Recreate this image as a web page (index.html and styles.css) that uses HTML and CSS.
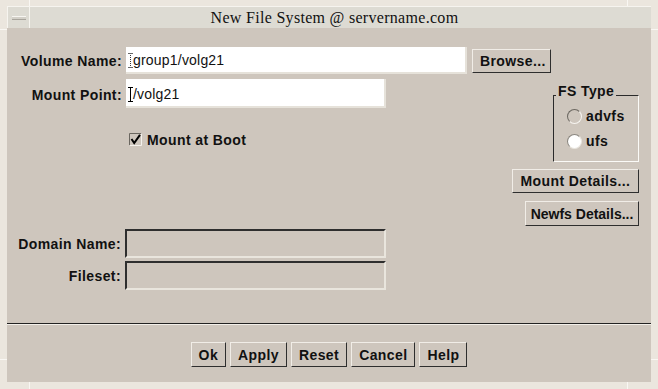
FILE: index.html
```html
<!DOCTYPE html>
<html lang="en">
<head>
    <meta charset="UTF-8">
    <meta name="viewport" content="width=device-width, initial-scale=1.0">
    <title>New File System</title>

    <link rel="stylesheet" href="styles.css">
</head>
<body>
    <div class="window">
        <div class="titlebar">
            <div class="menu-btn"><span class="menu-bar"></span></div>
            <div class="title">New File System @ servername.com</div>
        </div>

        <div class="content">
            <div class="row row-volume">
                <label class="label">Volume Name:</label>
                <div class="field field-volume"><span class="caret caret-idle"></span>group1/volg21</div>
                <button type="button" class="btn btn-browse">Browse...</button>
            </div>

            <div class="lower">
                <div class="fields">
                    <div class="row row-mount">
                        <label class="label">Mount Point:</label>
                        <div class="field field-mount"><span class="caret"></span>/volg21</div>
                    </div>

                    <div class="check-row">
                        <svg class="checkbox" width="13" height="13" viewBox="0 0 13 13">
                            <path d="M0.5 12.5V0.5H12.5" stroke="#6a665f" fill="none"/>
                            <path d="M0.5 12.5H12.5V0.5" stroke="#f4f1ec" fill="none"/>
                            <path d="M2.5 6L5.2 10L11 1.8" stroke="#000" stroke-width="2" fill="none"/>
                        </svg>
                        <span class="check-label">Mount at Boot</span>
                    </div>

                    <div class="row row-sunken row-domain">
                        <label class="label">Domain Name:</label>
                        <div class="field-sunken"></div>
                    </div>
                    <div class="row row-sunken row-fileset">
                        <label class="label">Fileset:</label>
                        <div class="field-sunken"></div>
                    </div>
                </div>

                <div class="side">
                    <div class="fs-type">
                        <span class="fs-legend">FS Type</span>
                        <div class="radio-row">
                            <span class="radio"></span>
                            <span>advfs</span>
                        </div>
                        <div class="radio-row">
                            <span class="radio radio-on"></span>
                            <span>ufs</span>
                        </div>
                    </div>
                    <button type="button" class="btn btn-mount">Mount Details...</button>
                    <button type="button" class="btn btn-newfs">Newfs Details...</button>
                </div>
            </div>

            <div class="separator"></div>

            <div class="actions">
                <button type="button" class="btn">Ok</button>
                <button type="button" class="btn">Apply</button>
                <button type="button" class="btn">Reset</button>
                <button type="button" class="btn">Cancel</button>
                <button type="button" class="btn">Help</button>
            </div>
        </div>
    </div>
</body>
</html>
```

FILE: styles.css
```css
* {
    margin: 0;
    padding: 0;
    box-sizing: border-box;
}

body {
    font-family: "Liberation Sans", Arial, sans-serif;
    font-size: 14px;
    color: #111;
}

/* window frame */
.window {
    width: 658px;
    height: 389px;
    padding: 6px 7px 7px 7px;
    display: flex;
    flex-direction: column;
    background:
        linear-gradient(#f9f7f3, #f9f7f3) 29px 0 / 1px 6px no-repeat,
        linear-gradient(#f9f7f3, #f9f7f3) 627px 0 / 1px 6px no-repeat,
        linear-gradient(#f9f7f3, #f9f7f3) 0 29px / 7px 1px no-repeat,
        linear-gradient(#f9f7f3, #f9f7f3) 651px 29px / 7px 1px no-repeat,
        linear-gradient(#f9f7f3, #f9f7f3) 0 359px / 7px 1px no-repeat,
        linear-gradient(#f9f7f3, #f9f7f3) 651px 359px / 7px 1px no-repeat,
        linear-gradient(#f9f7f3, #f9f7f3) 29px 382px / 1px 7px no-repeat,
        linear-gradient(#f9f7f3, #f9f7f3) 627px 382px / 1px 7px no-repeat,
        #ebe6de;
}

.titlebar {
    height: 22px;
    display: flex;
    background: #dddbd3;
    border-top: 1px solid #f6f4ef;
    border-left: 1px solid #f6f4ef;
}

.menu-btn {
    width: 22px;
    border-right: 1px solid #f6f4ef;
    display: flex;
    align-items: center;
    justify-content: center;
}

.menu-bar {
    width: 14px;
    height: 4px;
    background: #d3d0c8;
    border-top: 1px solid #f7f5f1;
    border-bottom: 1px solid #a8a49c;
}

.title {
    flex: 1;
    text-align: center;
    padding-right: 12px;
    font-family: "Liberation Serif", "Times New Roman", serif;
    font-size: 16px;
    letter-spacing: 0.3px;
    line-height: 21px;
    color: #111;
}

.content {
    flex: 1;
    background: #cec6bd;
    padding: 19px 12px 0 0;
    display: flex;
    flex-direction: column;
}

/* rows */
.row {
    display: flex;
    align-items: center;
}

.label {
    width: 115px;
    margin-right: 4px;
    text-align: right;
    font-weight: bold;
    letter-spacing: 0.4px;
    line-height: 16px;
}

.field {
    background: #fff;
    border-right: 2px solid #e6e2da;
    border-bottom: 2px solid #e6e2da;
    padding: 5px 0 0 2px;
    line-height: 16px;
    letter-spacing: 0.2px;
}

.field-volume {
    width: 341px;
    height: 27px;
}

.field-mount {
    width: 260px;
    height: 29px;
    padding-top: 7px;
}

.row-mount {
    align-items: flex-start;
}

.row-mount .label {
    padding-top: 8px;
}

/* text cursor */
.caret {
    display: inline-block;
    position: relative;
    width: 5px;
    height: 15px;
    vertical-align: -3px;
}

.caret::before {
    content: "";
    position: absolute;
    left: 2px;
    top: 0;
    bottom: 0;
    border-left: 1px solid #000;
}

.caret::after {
    content: "";
    position: absolute;
    inset: 0;
    border-top: 1px solid #000;
    border-bottom: 1px solid #000;
}

.caret-idle::before {
    border-left: 1px dotted #333;
}

.caret-idle::after {
    border-top-color: #666;
    border-bottom-color: #666;
}

.lower {
    display: flex;
    margin-top: 5px;
}

.fields {
    display: flex;
    flex-direction: column;
}

.check-row {
    display: flex;
    align-items: center;
    height: 13px;
    margin: 25px 0 0 122px;
    gap: 5px;
}

.check-label {
    font-weight: bold;
    letter-spacing: 0.4px;
    line-height: 16px;
}

.row-domain {
    margin-top: 83px;
}

.row-fileset {
    margin-top: 3px;
}

.row-sunken .label {
    width: 114px;
}

.field-sunken {
    width: 261px;
    height: 29px;
    border: 2px solid;
    border-color: #2e2e2e #e9e5dd #e9e5dd #2e2e2e;
}

/* right column */
.side {
    margin-left: auto;
    display: flex;
    flex-direction: column;
    align-items: flex-end;
}

.fs-type {
    position: relative;
    width: 86px;
    height: 67px;
    margin-top: 16px;
    padding: 12px 0 0 13px;
    border: 1px solid;
    border-color: #2a2a2a #fbfaf7 #fbfaf7 #2a2a2a;
}

.fs-legend {
    position: absolute;
    left: 2px;
    top: -13px;
    padding: 0 2px;
    background: #cec6bd;
    font-weight: bold;
    letter-spacing: 0.4px;
    line-height: 16px;
}

.radio-row {
    display: flex;
    align-items: center;
    gap: 4px;
    height: 16px;
    font-weight: bold;
    letter-spacing: 0.4px;
}

.radio-row + .radio-row {
    margin-top: 9px;
}

.radio {
    width: 15px;
    height: 15px;
    border-radius: 50%;
    border: 1px solid;
    border-color: #6b6760 #f7f5f1 #f7f5f1 #6b6760;
}

.radio-on {
    background: #fff;
    border-color: #8a867f #e9e5de #e9e5de #8a867f;
}

/* buttons */
.btn {
    height: 25px;
    padding: 0 7px;
    background: #cec6bd;
    border: 1px solid;
    border-color: #f1ede7 #2e2e2e #2e2e2e #f1ede7;
    font-family: "Liberation Sans", Arial, sans-serif;
    font-size: 14px;
    font-weight: bold;
    letter-spacing: 0.4px;
    white-space: nowrap;
    color: #111;
    cursor: pointer;
}

.btn-browse {
    width: 79px;
    height: 24px;
    margin-left: 5px;
}

.btn-mount {
    width: 127px;
    height: 24px;
    margin-top: 7px;
}

.btn-newfs {
    width: 114px;
    padding: 0 3px;
    margin-top: 8px;
    letter-spacing: 0;
}

.separator {
    margin: 33px -12px 0 0;
    border-top: 1px solid #222;
    border-bottom: 1px solid #f3efe9;
}

.actions {
    display: flex;
    justify-content: center;
    gap: 4px;
    margin: 17px -12px 0 0;
}
```
